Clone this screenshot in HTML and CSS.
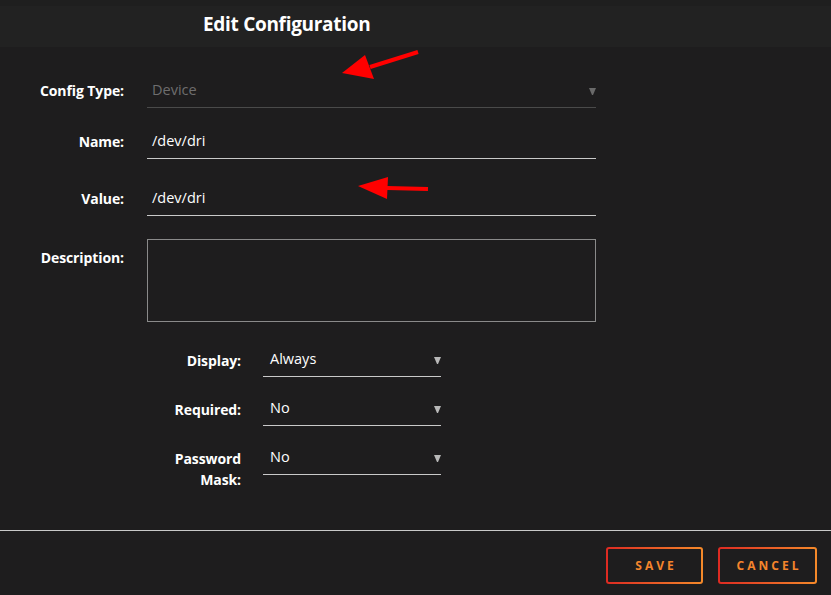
FILE: index.html
```html
<!DOCTYPE html>
<html>
    <head>
        <meta charset="utf-8">
        <title>Edit Configuration</title>
        <link rel="stylesheet" href="styles.css">
    </head>
    <body>
        <div class="dialog">
            <div class="head">
                <h1>Edit Configuration</h1>
            </div>

            <div class="form">
                <div class="row row-type">
                    <label>Config Type:</label>
                    <div class="field select dim">
                        <span>Device</span>
                        <svg class="caret" width="7" height="7" viewBox="0 0 7 7"><path d="M0 0h7L4 7h-1z" fill="currentColor"/></svg>
                    </div>
                </div>
                <div class="row row-name">
                    <label>Name:</label>
                    <div class="field"><span>/dev/dri</span></div>
                </div>
                <div class="row row-value">
                    <label>Value:</label>
                    <div class="field"><span>/dev/dri</span></div>
                </div>
                <div class="row row-desc">
                    <label>Description:</label>
                    <div class="area"></div>
                </div>
            </div>

            <div class="form small">
                <div class="row">
                    <label>Display:</label>
                    <div class="field select">
                        <span>Always</span>
                        <svg class="caret" width="7" height="7" viewBox="0 0 7 7"><path d="M0 0h7L4 7h-1z" fill="currentColor"/></svg>
                    </div>
                </div>
                <div class="row">
                    <label>Required:</label>
                    <div class="field select">
                        <span>No</span>
                        <svg class="caret" width="7" height="7" viewBox="0 0 7 7"><path d="M0 0h7L4 7h-1z" fill="currentColor"/></svg>
                    </div>
                </div>
                <div class="row">
                    <label>Password<br>Mask:</label>
                    <div class="field select">
                        <span>No</span>
                        <svg class="caret" width="7" height="7" viewBox="0 0 7 7"><path d="M0 0h7L4 7h-1z" fill="currentColor"/></svg>
                    </div>
                </div>
            </div>

            <div class="foot">
                <button class="btn">SAVE</button>
                <button class="btn btn-cancel">CANCEL</button>
            </div>

            <!-- annotation arrows drawn over the screenshot -->
            <svg class="arrow arrow-1" width="90" height="34" viewBox="0 0 90 34">
                <path d="M78 2 L30 17" stroke="#ff0000" stroke-width="4" fill="none"/>
                <path d="M2 23 L25 5 L34 29 z" fill="#ff0000"/>
            </svg>
            <svg class="arrow arrow-2" width="74" height="24" viewBox="0 0 74 24">
                <path d="M71 13 L30 12" stroke="#ff0000" stroke-width="4" fill="none"/>
                <path d="M1 10 L31 1 L30 23 z" fill="#ff0000"/>
            </svg>
        </div>
    </body>
</html>
```

FILE: styles.css
```css
*{
    margin:0px;
    padding:0px;
    box-sizing:border-box;
}
body{
    background:#1e1d1e;
    font-family:"Open Sans","Liberation Sans",sans-serif;
    color:#fff;
}
.dialog{
    width:831px;
    height:595px;
    position:relative;      /* arrows sit over the form */
    overflow:hidden;
}
.head{
    height:47px;
    background:#222222;
    border-top:6px solid #1f1f1f;
    display:flex;
    align-items:center;
    padding-left:203px;
}
.head h1{
    font-size:19px;
    font-weight:700;
    letter-spacing:-0.3px;
    margin-top:-6px;
}

.form{
    padding-top:33px;
}
.row{
    display:grid;
    grid-template-columns:124px 449px;
    column-gap:23px;
    align-items:start;
}
.row label{
    text-align:right;
    font-size:14px;
    font-weight:700;
    line-height:20px;
    padding-top:1px;
    letter-spacing:-0.1px;
}
.field{
    display:flex;
    align-items:center;
    justify-content:space-between;
    height:28px;
    padding:0 0 7px 5px;
    border-bottom:1px solid #c9c9c9;
    font-size:14.5px;
    line-height:20px;
}
.field.dim{
    color:#6e6e6e;
    border-bottom-color:#4a4a4a;
}
.caret{
    color:#b8b8b8;
    margin-top:3px;
}
.dim .caret{
    color:#6a6a6a;
}
.row-name{
    margin-top:23px;
}
.row-value{
    margin-top:29px;
}
.row-desc{
    margin-top:23px;
}
.row-desc label{
    padding-top:9px;
}
.area{
    height:83px;
    border:1px solid #8a8a8a;
}

.form.small{
    padding-top:27px;
}
.small .row{
    grid-template-columns:241px 178px;
    column-gap:22px;
    margin-bottom:21px;
}
.small .row label{
    line-height:21px;
}
.small .field{
    padding-left:7px;
}

.foot{
    position:absolute;
    left:0;
    right:0;
    top:530px;
    border-top:1px solid #c9c9c9;
    display:flex;
    justify-content:flex-end;
    gap:15px;
    padding:16px 14px 0 0;
}
.btn{
    height:37px;
    width:97px;
    font-family:"Open Sans","Liberation Sans",sans-serif;
    font-size:12px;
    font-weight:700;
    letter-spacing:3px;
    color:#f5852c;
    border:2px solid transparent;
    border-radius:3px;
    background:linear-gradient(#1e1d1e,#1e1d1e) padding-box,
               linear-gradient(90deg,#dd2a22,#f58a2a) border-box;
    padding-left:3px;
}
.btn-cancel{
    width:99px;
}

.arrow{
    position:absolute;
}
.arrow-1{
    left:340px;
    top:50px;
}
.arrow-2{
    left:357px;
    top:176px;
}
```
